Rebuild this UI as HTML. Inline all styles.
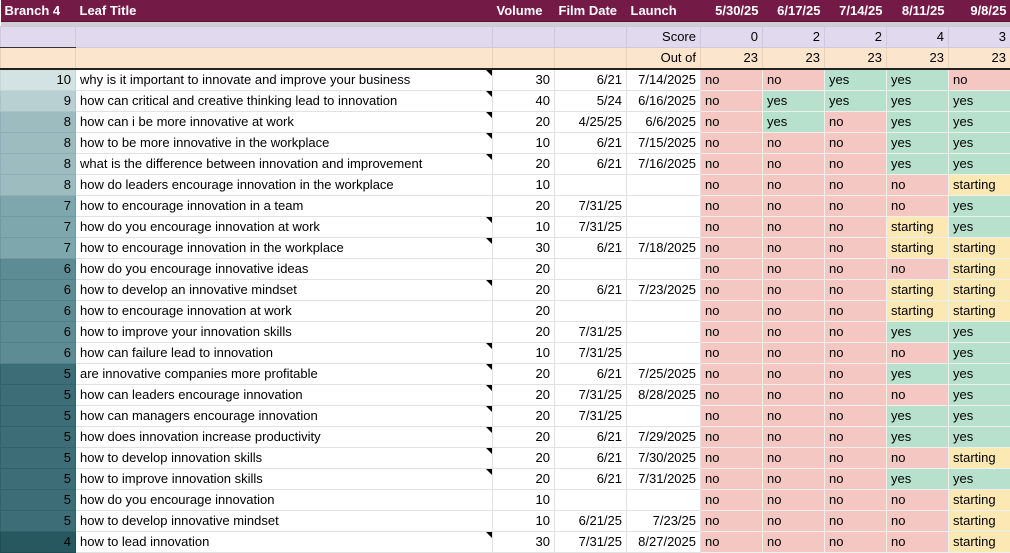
<!DOCTYPE html>
<html><head><meta charset="utf-8"><style>
body{margin:0;width:1010px;height:552px;overflow:hidden;background:#fff;font-family:"Liberation Sans",Arial,sans-serif;font-size:13px;color:#000}
table{border-collapse:collapse;table-layout:fixed;width:1010px}
td{height:20px;padding:0 4px;border:1px solid #e2e2e2;white-space:nowrap;overflow:hidden;line-height:20px;position:relative}
tr.h td{background:#741a47;color:#fff;font-weight:bold;height:21px;border:none;border-bottom:1px solid #5a1236}
tr.h td.r{text-align:right}
tr.g td{height:4px;padding:0;background:#cfcfcf;border:none;line-height:0}
tr.l td{background:#e1d9ee;border-color:#d0c8dc}
tr.p td{background:#fce5cd;border-color:#e8d2bb;border-bottom:2px solid #222}
.r{text-align:right}
.n{background:#f4c7c3}.y{background:#b7e1cd}.s{background:#fce8b2}
td.st{border-color:#eef0ee}
.t:after{content:"";position:absolute;right:0;top:0;border-top:6px solid #000;border-left:6px solid transparent}
</style></head><body>
<table>
<colgroup><col style="width:75px"><col style="width:417px"><col style="width:62px"><col style="width:72px"><col style="width:74px"><col style="width:62px"><col style="width:62px"><col style="width:62px"><col style="width:62px"><col style="width:62px"></colgroup>
<tr class="h"><td>Branch 4</td><td>Leaf Title</td><td>Volume</td><td>Film Date</td><td>Launch</td><td class="r">5/30/25</td><td class="r">6/17/25</td><td class="r">7/14/25</td><td class="r">8/11/25</td><td class="r">9/8/25</td></tr>
<tr class="g"><td></td><td></td><td></td><td></td><td></td><td></td><td></td><td></td><td></td><td></td></tr>
<tr class="l"><td style="border-bottom:1px solid #333"></td><td></td><td></td><td></td><td class="r">Score</td><td class="r">0</td><td class="r">2</td><td class="r">2</td><td class="r">4</td><td class="r">3</td></tr>
<tr class="p"><td></td><td></td><td></td><td></td><td class="r">Out of</td><td class="r">23</td><td class="r">23</td><td class="r">23</td><td class="r">23</td><td class="r">23</td></tr>
<tbody id="b"></tbody>
</table>
<script>
var rows=[
[10,"why is it important to innovate and improve your business",30,"6/21","7/14/2025","nnyyn",1],
[9,"how can critical and creative thinking lead to innovation",40,"5/24","6/16/2025","nyyyy",1],
[8,"how can i be more innovative at work",20,"4/25/25","6/6/2025","nynyy",1],
[8,"how to be more innovative in the workplace",10,"6/21","7/15/2025","nnnyy",1],
[8,"what is the difference between innovation and improvement",20,"6/21","7/16/2025","nnnyy",1],
[8,"how do leaders encourage innovation in the workplace",10,"","","nnnns",0],
[7,"how to encourage innovation in a team",20,"7/31/25","","nnnny",0],
[7,"how do you encourage innovation at work",10,"7/31/25","","nnnsy",1],
[7,"how to encourage innovation in the workplace",30,"6/21","7/18/2025","nnnss",1],
[6,"how do you encourage innovative ideas",20,"","","nnnns",0],
[6,"how to develop an innovative mindset",20,"6/21","7/23/2025","nnnss",1],
[6,"how to encourage innovation at work",20,"","","nnnss",0],
[6,"how to improve your innovation skills",20,"7/31/25","","nnnyy",0],
[6,"how can failure lead to innovation",10,"7/31/25","","nnnny",1],
[5,"are innovative companies more profitable",20,"6/21","7/25/2025","nnnyy",1],
[5,"how can leaders encourage innovation",20,"7/31/25","8/28/2025","nnnny",1],
[5,"how can managers encourage innovation",20,"7/31/25","","nnnyy",1],
[5,"how does innovation increase productivity",20,"6/21","7/29/2025","nnnyy",1],
[5,"how to develop innovation skills",20,"6/21","7/30/2025","nnnns",1],
[5,"how to improve innovation skills",20,"6/21","7/31/2025","nnnyy",1],
[5,"how do you encourage innovation",10,"","","nnnns",0],
[5,"how to develop innovative mindset",10,"6/21/25","7/23/25","nnnns",0],
[4,"how to lead innovation",30,"7/31/25","8/27/2025","nnnns",1]];
var col={10:"#d3e3e3",9:"#b9d0d2",8:"#9dbcc0",7:"#7ea6ad",6:"#5e8c95",5:"#3d6e78",4:"#275860"};
var bc={10:"#c4d6d6",9:"#aac4c6",8:"#8fb0b4",7:"#7099a0",6:"#527f88",5:"#33626b",4:"#204c53"};
var w={n:"no",y:"yes",s:"starting"};var h="";
rows.forEach(function(r){
h+='<tr><td class="r" style="background:'+col[r[0]]+';border-color:'+bc[r[0]]+'">'+r[0]+'</td><td'+(r[6]?' class="t"':'')+'>'+r[1]+'</td><td class="r">'+r[2]+'</td><td class="r">'+r[3]+'</td><td class="r">'+r[4]+'</td>';
for(var i=0;i<5;i++){var c=r[5][i];h+='<td class="st '+c+'">'+w[c]+'</td>';}
h+='</tr>';});
document.getElementById("b").innerHTML=h;
</script>
</body></html>
